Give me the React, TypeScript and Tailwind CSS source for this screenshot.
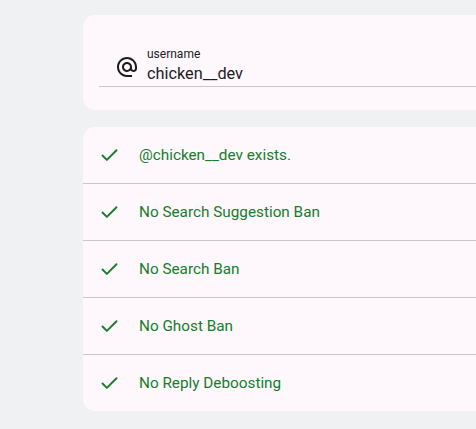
import { Check } from 'lucide-react';

const checks = [
  '@chicken__dev exists.',
  'No Search Suggestion Ban',
  'No Search Ban',
  'No Ghost Ban',
  'No Reply Deboosting',
];

function AtIcon() {
  return (
    <svg width="24" height="24" viewBox="0 0 24 24" fill="currentColor">
      <path d="M12 2C6.48 2 2 6.48 2 12s4.48 10 10 10h5v-2h-5c-4.34 0-8-3.66-8-8s3.66-8 8-8 8 3.66 8 8v1.43c0 .79-.71 1.57-1.5 1.57s-1.5-.78-1.5-1.57V12c0-2.76-2.24-5-5-5s-5 2.24-5 5 2.24 5 5 5c1.38 0 2.64-.56 3.54-1.47.65.89 1.77 1.47 2.96 1.47 1.97 0 3.5-1.6 3.5-3.57V12c0-5.52-4.48-10-10-10zm0 13c-1.66 0-3-1.34-3-3s1.34-3 3-3 3 1.34 3 3-1.34 3-3 3z" />
    </svg>
  );
}

export default function App() {
  return (
    <div className="w-screen h-screen overflow-hidden bg-[#eff1f2] font-['Roboto','Noto_Sans',sans-serif]">
      <div className="ml-[83px] w-[520px] pt-[15px] flex flex-col gap-[17px]">
        <div className="rounded-xl bg-[#fef8fc] px-4 pt-[16px] pb-[23px]">
          <div className="h-14 flex items-start pt-[15px] border-b border-[#cbc6cc] text-[#1d1b1f]">
            <div className="flex items-center">
              <div className="pl-4 pr-2 pt-px">
                <AtIcon />
              </div>
              <div className="flex flex-col">
                <span className="text-[12px] leading-4 text-[#1d1b20]">username</span>
                <span className="text-[16.3px] leading-6">chicken__dev</span>
              </div>
            </div>
          </div>
        </div>

        <div className="rounded-xl bg-[#fef8fc] flex flex-col">
          {checks.map((label, i) => (
            <div
              key={label}
              className={`flex items-center pl-4 gap-[19px] text-[#157d2c] ${
                i < checks.length - 1 ? 'border-b border-[#c8c7ca] h-[57px]' : 'h-14'
              }`}
            >
              <Check size={21} strokeWidth={2.2} />
              <span className="text-[15.3px] leading-5">{label}</span>
            </div>
          ))}
        </div>
      </div>
    </div>
  );
}
